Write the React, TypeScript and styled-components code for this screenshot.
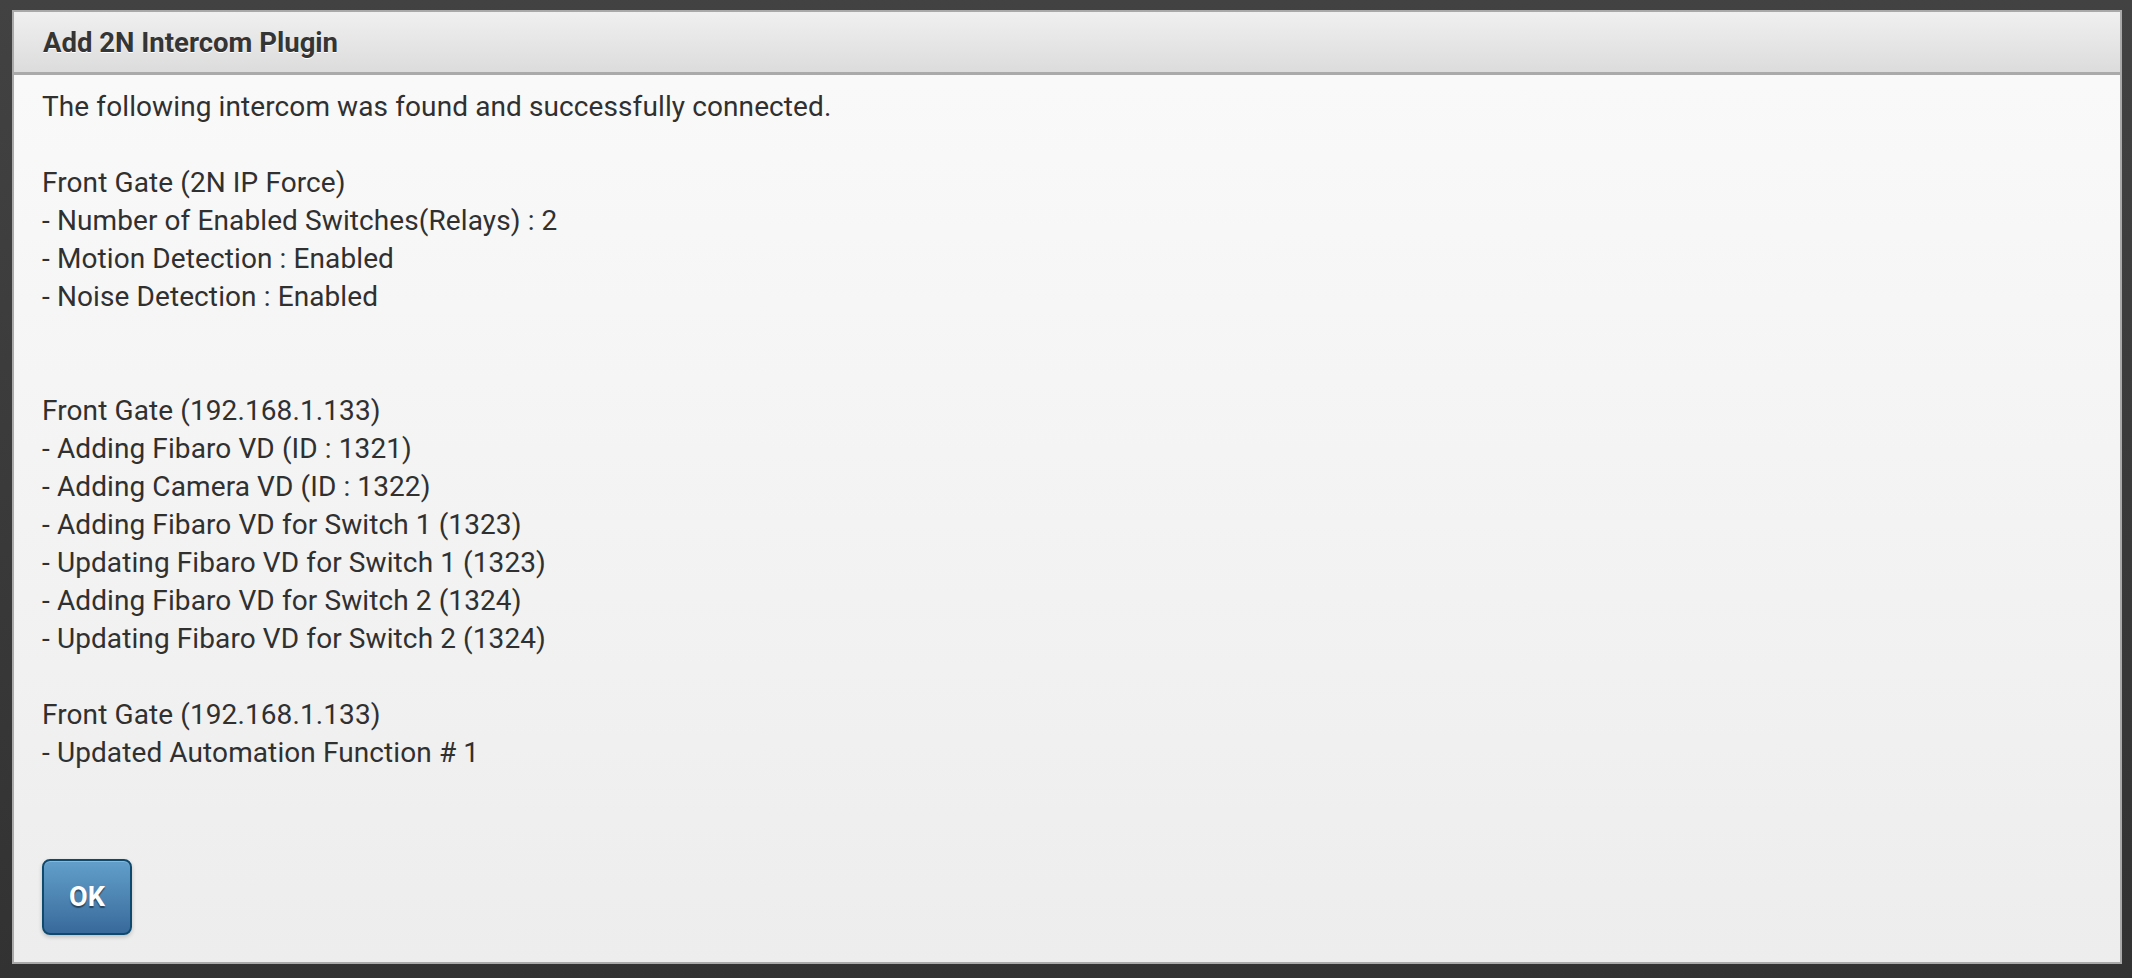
import React from "react";
import styled, { createGlobalStyle } from "styled-components";

const Global = createGlobalStyle`
  html, body { margin: 0; padding: 0; }
  body {
    background: linear-gradient(#424242, #323232);
    font-family: Roboto, "Liberation Sans", sans-serif;
  }
`;

const Page = styled.div`
  box-sizing: border-box;
  height: 978px;
  padding: 10px 10px 14px 12px;
  display: flex;
`;

const Dialog = styled.div`
  flex: 1;
  display: flex;
  flex-direction: column;
  border: 2px solid #a9a9a9;
  background: linear-gradient(#fafafa, #ededed);
`;

const Header = styled.div`
  height: 60px;
  flex: none;
  display: flex;
  align-items: center;
  padding-left: 29px;
  background: linear-gradient(#f0f0f0, #dcdcdc);
  border-bottom: 3px solid #aaaaaa;
  font-weight: 700;
  font-size: 27.5px;
  color: #353535;
  text-shadow: 0 1px 0 #ffffff;
`;

const Body = styled.div`
  flex: 1;
  display: flex;
  flex-direction: column;
  padding: 13px 28px 27px;
`;

const Content = styled.div`
  font-size: 28px;
  line-height: 38px;
  color: #303030;
  letter-spacing: 0.1px;
`;

const Line = styled.div`
  height: 38px;
  white-space: pre;
`;

const OkButton = styled.button`
  margin-top: auto;
  width: 90px;
  height: 76px;
  box-sizing: border-box;
  border: 2px solid #0f4a6e;
  border-radius: 8px;
  background: linear-gradient(#629fca, #386a9b);
  box-shadow: inset 0 1px 0 rgba(255,255,255,0.25), 0 2px 4px rgba(0,0,0,0.2);
  color: #ffffff;
  font-family: Roboto, "Liberation Sans", sans-serif;
  font-weight: 700;
  font-size: 27px;
  text-shadow: 0 2px 1px rgba(0,0,0,0.45);
  cursor: pointer;
  padding: 0;
`;

const lines = [
  "The following intercom was found and successfully connected.",
  "",
  "Front Gate (2N IP Force)",
  "- Number of Enabled Switches(Relays) : 2",
  "- Motion Detection : Enabled",
  "- Noise Detection : Enabled",
  "",
  "",
  "Front Gate (192.168.1.133)",
  "- Adding Fibaro VD (ID : 1321)",
  "- Adding Camera VD (ID : 1322)",
  "- Adding Fibaro VD for Switch 1 (1323)",
  "- Updating Fibaro VD for Switch 1 (1323)",
  "- Adding Fibaro VD for Switch 2 (1324)",
  "- Updating Fibaro VD for Switch 2 (1324)",
  "",
  "Front Gate (192.168.1.133)",
  "- Updated Automation Function # 1",
];

export default function App() {
  return (
    <>
      <Global />
      <Page>
        <Dialog>
          <Header>Add 2N Intercom Plugin</Header>
          <Body>
            <Content>
              {lines.map((l, i) => (
                <Line key={i}>{l}</Line>
              ))}
            </Content>
            <OkButton>OK</OkButton>
          </Body>
        </Dialog>
      </Page>
    </>
  );
}
